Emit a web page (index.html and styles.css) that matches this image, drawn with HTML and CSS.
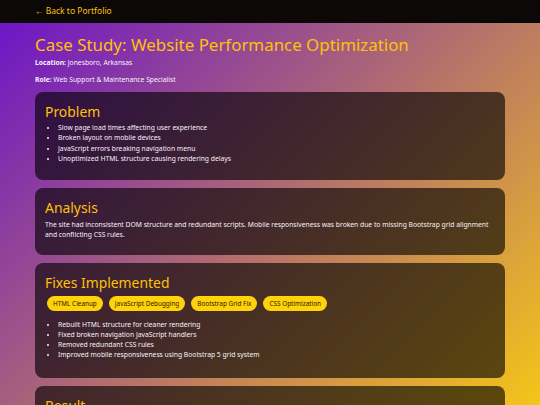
FILE: index.html
```html
<!DOCTYPE html>
<html lang="en">
<head>
<meta charset="utf-8">
<title>Case Study: Website Performance Optimization</title>
<link rel="stylesheet" href="styles.css">
</head>
<body>
<nav class="topbar">
  <a class="back" href="#">&larr; Back to Portfolio</a>
</nav>
<main class="page">
  <h1 class="title">Case Study: Website Performance Optimization</h1>
  <p class="meta"><strong>Location:</strong> Jonesboro, Arkansas</p>
  <p class="meta"><strong>Role:</strong> Web Support &amp; Maintenance Specialist</p>

  <section class="card">
    <h2 class="card-title">Problem</h2>
    <ul class="list">
      <li>Slow page load times affecting user experience</li>
      <li>Broken layout on mobile devices</li>
      <li>JavaScript errors breaking navigation menu</li>
      <li>Unoptimized HTML structure causing rendering delays</li>
    </ul>
  </section>

  <section class="card">
    <h2 class="card-title">Analysis</h2>
    <p class="text">The site had inconsistent DOM structure and redundant scripts. Mobile responsiveness was broken due to missing Bootstrap grid alignment and conflicting CSS rules.</p>
  </section>

  <section class="card">
    <h2 class="card-title">Fixes Implemented</h2>
    <div class="pills">
      <span class="pill">HTML Cleanup</span>
      <span class="pill">JavaScript Debugging</span>
      <span class="pill">Bootstrap Grid Fix</span>
      <span class="pill">CSS Optimization</span>
    </div>
    <ul class="list">
      <li>Rebuilt HTML structure for cleaner rendering</li>
      <li>Fixed broken navigation JavaScript handlers</li>
      <li>Removed redundant CSS rules</li>
      <li>Improved mobile responsiveness using Bootstrap 5 grid system</li>
    </ul>
  </section>

  <section class="card">
    <h2 class="card-title">Result</h2>
    <p class="text">Page load times improved and the layout now renders correctly on all devices.</p>
  </section>
</main>
</body>
</html>
```

FILE: styles.css
```css
html {
  min-height: 100%;
  background: linear-gradient(135deg, #6a11cb 0%, #f5c518 100%) fixed;
}
body {
  margin: 0;
  font-family: "Noto Sans", "Open Sans", sans-serif;
  color: #f6f2f6;
  font-size: 6.75px;
  line-height: 1.5;
}
.topbar {
  height: 23px;
  background: #0c0808;
  display: flex;
  align-items: center;
  padding: 0 35px;
}
.back {
  color: #ffc107;
  text-decoration: none;
  font-size: 8.5px;
}
.page {
  padding: 0 35px 20px;
}
.title {
  margin: 11px 0 3px;
  font-size: 16.9px;
  font-weight: 400;
  line-height: 21px;
  color: #ffc107;
}
.meta {
  margin: 0 0 7px;
}
.meta strong {
  font-weight: 700;
}
.card {
  background: rgba(0, 0, 0, 0.62);
  border-radius: 8px;
  padding: 10px;
  margin-bottom: 8px;
}
.card-title {
  margin: 0 0 1px;
  font-size: 13.9px;
  font-weight: 400;
  line-height: 20px;
  color: #ffc107;
}
.list {
  margin: 0 0 6px;
  padding-left: 13px;
}
.text {
  margin: 2px 0 5px;
}
.pills {
  display: flex;
  gap: 6px;
  padding-left: 2px;
  margin: 3px 0 9px;
}
.pill {
  background: #ffd20a;
  color: #2a2000;
  border-radius: 8px;
  padding: 0 6px;
  height: 15px;
  display: flex;
  align-items: center;
  font-size: 6.4px;
}
.pills + .list {
  margin-bottom: 7px;
}
```
